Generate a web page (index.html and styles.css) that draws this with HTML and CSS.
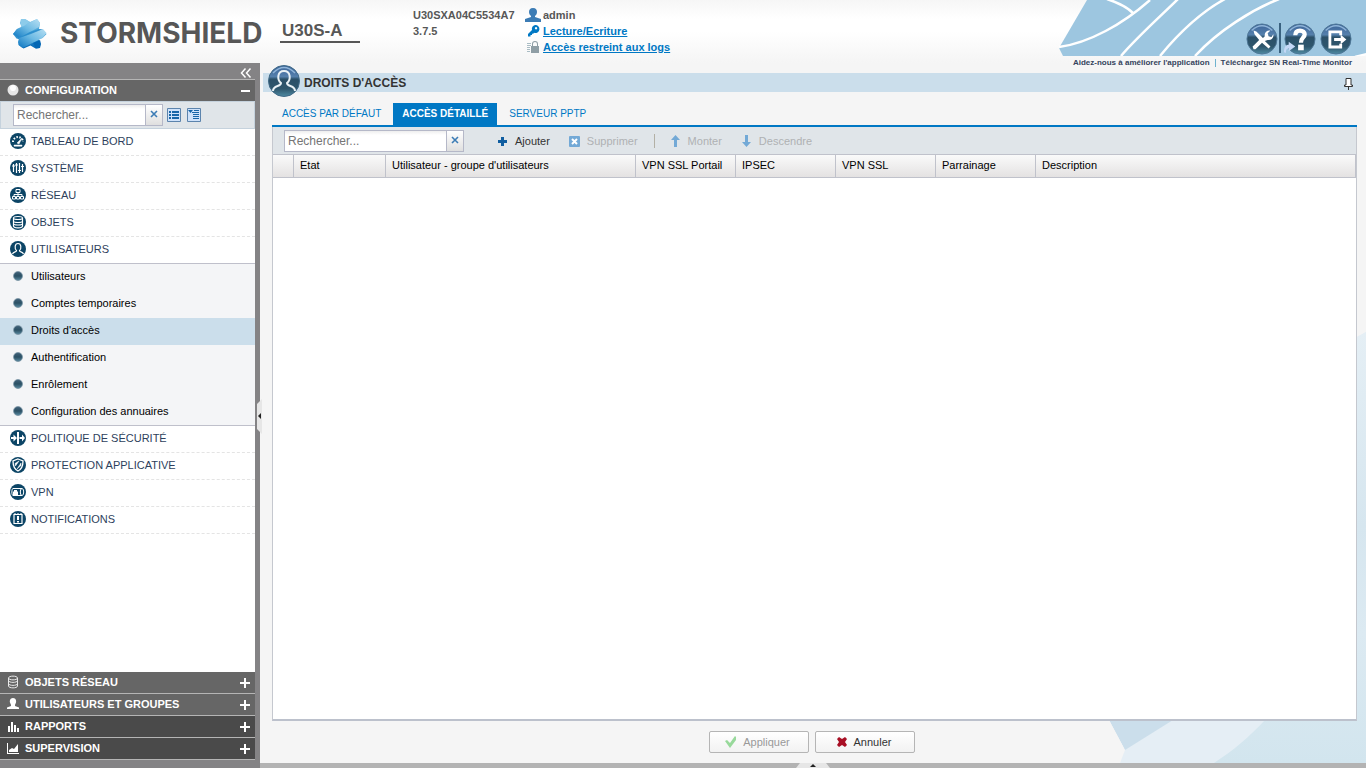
FILE: index.html
```html
<!DOCTYPE html>
<html lang="fr">
<head>
<meta charset="utf-8">
<title>Stormshield U30S-A - Droits d'accès</title>
<link rel="stylesheet" href="styles.css">
</head>
<body>
<svg class="defs" aria-hidden="true">
  <defs>
    <linearGradient id="orb" x1="0" y1="0" x2="0" y2="1">
      <stop offset="0" stop-color="#3c6499"/><stop offset=".36" stop-color="#5580ac"/><stop offset=".44" stop-color="#2b5068"/><stop offset=".75" stop-color="#2e566c"/><stop offset="1" stop-color="#4f8ba3"/>
    </linearGradient>
    <linearGradient id="star" x1="0" y1="0" x2="0" y2="1">
      <stop offset="0" stop-color="#7cc3e8"/><stop offset=".5" stop-color="#3f9fd6"/><stop offset="1" stop-color="#0467b4"/>
    </linearGradient>
    <linearGradient id="band" x1="0" y1="1" x2="1" y2="0">
      <stop offset="0" stop-color="#0a74c0"/><stop offset=".5" stop-color="#6bb9e3"/><stop offset="1" stop-color="#b9e0f3"/>
    </linearGradient>
    <linearGradient id="haze" x1="0" y1="0" x2="0" y2="1">
      <stop offset="0" stop-color="#e5eff5"/><stop offset=".45" stop-color="#d6e6ef"/><stop offset=".7" stop-color="#dceaf2"/><stop offset="1" stop-color="#d2e5ee"/>
    </linearGradient>
  </defs>
</svg>

<header class="header">
  <svg class="logo" viewBox="0 0 34 30" aria-hidden="true">
    <path d="M8 0l4 0 5 3 7-3 3 4-1 6 4 1 3.500 4-4 4-4 1 2 5-1 4-4 0.500-5-3-7 3-4-3 1-6-4-1L0 15l4-5 5-1-2-5z" fill="url(#star)"/>
    <path d="M0 15l4-5L24 0l3 4-1 4-20 11z" fill="url(#band)"/>
    <path d="M5 23l1-4 24-9 3.500 4-4 5-20 10-4-3z" fill="url(#band)"/>
    <path d="M8 0h4l5 3-6 4-3 1z" fill="#8ccbea"/>
    <path d="M20 24l7-3 1 4-1 4-4 .5z" fill="#0467b4"/>
    <path d="M6 19l11-6 9-3 4 0-12 5z" fill="#1c82c6" opacity=".6"/>
  </svg>
  <span class="brand">STORMSHIELD</span>
  <span class="model">U30S-A</span>
  <div class="device"><span>U30SXA04C5534A7</span><span>3.7.5</span></div>
  <div class="session">
    <div class="session-row">
      <svg width="16" height="14" viewBox="0 0 16 14"><path d="M8 0c3 0 4 2 4 4 0 2-1 3-2 4v1l6 2v3H0v-3l6-2V8C5 7 4 6 4 4c0-2 1-4 4-4z" fill="#3c7cb5"/></svg>
      <span>admin</span>
    </div>
    <div class="session-row">
      <svg width="16" height="14" viewBox="0 0 16 14"><path fill-rule="evenodd" d="M10 1a4 4 0 1 1-1 7.700L8 10 7 9.500V11H5.500v1.500H3V10l4-4a4 4 0 0 1 3-5zm1 2a1.200 1.200 0 1 0 .1 0z" fill="#0078c4"/></svg>
      <a href="#">Lecture/Ecriture</a>
    </div>
    <div class="session-row">
      <svg width="16" height="14" viewBox="0 0 16 14"><path d="M2 3h4v1H2zm0 2h4v1H2zm0 2h3v1H2zm0 2h3v1H2zm0 2h3v1H2z" fill="#a9bcc4"/><path fill-rule="evenodd" d="M6 6h1V4a3 3 0 0 1 6 0v2h1v7H6zm2 0h4V4a2 2 0 0 0-4 0z" fill="#8f9ea5"/></svg>
      <a href="#">Accès restreint aux logs</a>
    </div>
  </div>
  <div class="banner">
    <svg class="banner-art" viewBox="0 0 307 56" preserveAspectRatio="xMaxYMin slice" aria-hidden="true">
      <path d="M28 0H307V55L296 56H4L0 48z" fill="#9dc6e0"/>
      <g fill="none" stroke="#fff" stroke-width="2.500">
        <path d="M0 47C30 43 64 24 91 0M48-1C57 2 68 7 74 13M62 56C77 38 105 13 119-1M101 56C124 28 144 11 166-1M136 56C160 30 193 10 220-1M296 57l12-3"/>
      </g>
    </svg>
    <div class="banner-tools">
      <button class="orb" aria-label="Outils"><svg width="32" height="32" viewBox="0 0 34 34"><circle cx="17" cy="17" r="16" fill="url(#orb)" stroke="#4f7898"/><path d="M6 8Q17-2 28 8" fill="none" stroke="#8fb4d8" stroke-width="1.500"/><path d="M8 8l3 1 7 7 2-2a5 5 0 0 1 6-6l-3 3 1 3 3 1 2-3a5 5 0 0 1-6 6l-3 1 6 6-2 2-7-6-5 5-2 2H8l-1-3 2-2 5-5-5-6z" fill="#fff"/></svg></button>
      <span class="tool-sep"></span>
      <button class="orb" aria-label="Aide"><svg width="32" height="32" viewBox="0 0 34 34"><circle cx="17" cy="17" r="16" fill="url(#orb)" stroke="#4f7898"/><path d="M6 8Q17-2 28 8" fill="none" stroke="#8fb4d8" stroke-width="1.500"/><path d="M12 13c0-4 2-5 5-5s5 2 5 4c0 4-4 3-4 9" fill="none" stroke="#fff" stroke-width="4.500"/><path d="M15 23h6v6h-6z" fill="#fff"/><path d="M0 31c0-7 3-8 5-8v-3l7 5-7 5v-3c-2 0-3 1-3 5z" fill="#c5d8f6"/></svg></button>
      <button class="orb" aria-label="Déconnexion"><svg width="32" height="32" viewBox="0 0 34 34"><circle cx="17" cy="17" r="16" fill="url(#orb)" stroke="#4f7898"/><path d="M6 8Q17-2 28 8" fill="none" stroke="#8fb4d8" stroke-width="1.500"/><path d="M22 13V9.500H10.500v16H22V22M15 17.500h9" fill="none" stroke="#fff" stroke-width="3"/><path d="M22 12.500l6 5-6 5z" fill="#fff"/></svg></button>
    </div>
    <div class="banner-links"><a href="#">Aidez-nous à améliorer l'application</a><i></i><a href="#">Téléchargez SN Real-Time Monitor</a></div>
  </div>
</header>

<div class="shell">
  <aside class="sidebar">
    <div class="collapse"><button class="plain" aria-label="Réduire"><svg width="12" height="10" viewBox="0 0 12 10"><path d="M5.500.5L1.500 5l4 4.500M10.500.5L6.500 5l4 4.500" fill="none" stroke="#fff" stroke-width="1.500"/></svg></button></div>
    <button class="section section-open">
      <svg width="12" height="12" viewBox="0 0 12 12"><circle cx="6" cy="6" r="5.500" fill="#e6e6e6"/><circle cx="6" cy="4" r="3" fill="#fff"/></svg>
      <span>CONFIGURATION</span>
      <svg class="sign" width="11" height="11" viewBox="0 0 11 11"><path d="M1 4h9v2H1z" fill="#fff"/></svg>
    </button>
    <div class="side-search">
      <div class="search"><input type="text" placeholder="Rechercher..." aria-label="Rechercher un module"><button aria-label="Effacer"><svg width="8" height="8" viewBox="0 0 8 8"><path d="M1 1l6 6M7 1L1 7" stroke="#3c7cb5" stroke-width="1.600"/></svg></button></div>
      <button class="plain" aria-label="Tout replier"><svg width="14" height="14" viewBox="0 0 14 14"><path d="M.5.5h13v13H.5z" fill="#cfe2fa" stroke="#5c84ad"/><path d="M2 3h2v2H2zm3 0h7v2H5zM2 6h2v2H2zm3 0h7v2H5zM2 9h2v2H2zm3 0h7v2H5z" fill="#1766a8"/></svg></button>
      <button class="plain" aria-label="Tout déplier"><svg width="14" height="14" viewBox="0 0 14 14"><path d="M.5.5h13v13H.5z" fill="#cfe2fa" stroke="#5c84ad"/><path d="M1 2h5L3.500 5zM7 2h5v1H7zM5 4h7v1H5zm1 2h6v1H6zm0 2h6v1H6zm0 2h6v1H6z" fill="#1766a8"/></svg></button>
    </div>
    <nav class="menu">
      <a class="item" href="#"><svg viewBox="0 0 16 16"><circle cx="8" cy="8" r="8" fill="#0c4566"/><path d="M3 9a5 5 0 0 1 10 0" fill="none" stroke="#fff" stroke-width="2" stroke-dasharray="1.500 1.500"/><path d="M7 10l5-5-3 6zM4 12h8v1.200H4z" fill="#fff" stroke="#fff" stroke-width=".5"/></svg>TABLEAU DE BORD</a>
      <a class="item" href="#"><svg viewBox="0 0 16 16"><circle cx="8" cy="8" r="8" fill="#0c4566"/><path d="M3.500 4v8M6.500 3v10M9.500 3v10M12.500 4v8M2 6h3M5 5h3M8 10.500h3M11 6.500h3" stroke="#fff" stroke-width="1.200"/></svg>SYSTÈME</a>
      <a class="item" href="#"><svg viewBox="0 0 16 16"><circle cx="8" cy="8" r="8" fill="#0c4566"/><path d="M6 2.500h4v3H6zM2.500 9.500h3v2.500h-3zm4 0h3v2.500h-3zm4 0h3v2.500h-3zM8 5.500v4M4 9.500v-2h8v2" fill="none" stroke="#fff"/></svg>RÉSEAU</a>
      <a class="item" href="#"><svg viewBox="0 0 16 16"><circle cx="8" cy="8" r="8" fill="#0c4566"/><path d="M3.500 4c0-2 9-2 9 0s-9 2-9 0v8c0 2.500 9 2.500 9 0V4M3.500 7c0 2 9 2 9 0M3.500 9.500c0 2 9 2 9 0" fill="none" stroke="#fff" stroke-width="1.200"/></svg>OBJETS</a>
      <a class="item item-open" href="#"><svg viewBox="0 0 16 16"><circle cx="8" cy="8" r="8" fill="#0c4566"/><path d="M2.500 13c1-3 4-1.500 4-3.500C4.500 8 4.500 2.500 8 2.500S11.500 8 9.500 9.500c0 2 3 .5 4 3.500" fill="none" stroke="#fff" stroke-width="1.200"/></svg>UTILISATEURS</a>
      <div class="submenu">
        <a href="#"><i></i>Utilisateurs</a>
        <a href="#"><i></i>Comptes temporaires</a>
        <a href="#" class="current" aria-current="page"><i></i>Droits d'accès</a>
        <a href="#"><i></i>Authentification</a>
        <a href="#"><i></i>Enrôlement</a>
        <a href="#"><i></i>Configuration des annuaires</a>
      </div>
      <a class="item" href="#"><svg viewBox="0 0 16 16"><circle cx="8" cy="8" r="8" fill="#0c4566"/><path d="M7 2h2v12H7zM1 7h2.500V4.500L7 8l-3.500 3.500V9H1zM9.500 7H12V4.500L15 8l-3 3.500V9H9.500z" fill="#fff"/></svg>POLITIQUE DE SÉCURITÉ</a>
      <a class="item" href="#"><svg viewBox="0 0 16 16"><circle cx="8" cy="8" r="8" fill="#0c4566"/><path d="M8 2l5 2c0 5-1 8-5 10C4 12 3 9 3 4z" fill="none" stroke="#fff" stroke-width="1.300"/><path d="M5 6.500L9 4 5.500 9zM7 12l4-6v2.500z" fill="#fff" stroke="#fff" stroke-width=".5"/></svg>PROTECTION APPLICATIVE</a>
      <a class="item" href="#"><svg viewBox="0 0 16 16"><circle cx="8" cy="8" r="8" fill="#0c4566"/><path d="M12 4.500H3c-1.500 0-1.500 7 0 7h9" fill="none" stroke="#fff"/><ellipse cx="12" cy="8" rx="1.700" ry="3.500" fill="none" stroke="#fff"/><path d="M3 7.500h1V6h3v1.500h1V11H3z" fill="#fff"/></svg>VPN</a>
      <a class="item" href="#"><svg viewBox="0 0 16 16"><circle cx="8" cy="8" r="8" fill="#0c4566"/><path d="M4 3.500h8v9H4z" fill="none" stroke="#fff" stroke-width="1.200"/><path d="M7 5h2v4H7zm0 5h2v1.500H7z" fill="#fff"/><path d="M5 2v2M8 2v2M11 2v2" stroke="#fff"/></svg>NOTIFICATIONS</a>
    </nav>
    <button class="section">
      <svg width="12" height="14" viewBox="0 0 12 14"><path d="M1.500 3c0-2.500 9-2.500 9 0s-9 2.500-9 0v8c0 2.500 9 2.500 9 0V3M1.500 5.500c0 2.500 9 2.500 9 0M1.500 8.500c0 2.500 9 2.500 9 0" fill="none" stroke="#e8e8e8"/></svg>
      <span>OBJETS RÉSEAU</span><svg class="sign" width="11" height="11" viewBox="0 0 11 11"><path d="M0 4h10v2H0zM4 0h2v10H4z" fill="#fff"/></svg>
    </button>
    <button class="section">
      <svg width="12" height="14" viewBox="0 0 12 14"><path d="M6 1c3 0 3.500 3 3 4.500C8.500 7 8 7 8 9l4 1.500V12H0v-1.500L4 9c0-2-.5-2-1-3.500C2.500 4 3 1 6 1z" fill="#fff"/></svg>
      <span>UTILISATEURS ET GROUPES</span><svg class="sign" width="11" height="11" viewBox="0 0 11 11"><path d="M0 4h10v2H0zM4 0h2v10H4z" fill="#fff"/></svg>
    </button>
    <button class="section section-dark">
      <svg width="12" height="14" viewBox="0 0 12 14"><path d="M1 7h2v6H1zm3-4h2v10H4zm3 3h2v7H7zm3 3h2v4h-2z" fill="#fff"/></svg>
      <span>RAPPORTS</span><svg class="sign" width="11" height="11" viewBox="0 0 11 11"><path d="M0 4h10v2H0zM4 0h2v10H4z" fill="#fff"/></svg>
    </button>
    <button class="section section-dark">
      <svg width="12" height="14" viewBox="0 0 12 14"><path d="M0 2h1v10h11v1H0z" fill="#fff"/><path d="M2 11V9l3-2 2 1 4-5v8z" fill="#fff"/></svg>
      <span>SUPERVISION</span><svg class="sign" width="11" height="11" viewBox="0 0 11 11"><path d="M0 4h10v2H0zM4 0h2v10H4z" fill="#fff"/></svg>
    </button>
  </aside>
  <div class="splitter"><button class="grip" aria-label="Replier le panneau"><svg width="5" height="35" viewBox="0 0 5 35"><path d="M5 0v35L0 30V5z" fill="#e6e6e6"/><path d="M4 14v6l-3-3z" fill="#222"/></svg></button></div>

  <main class="main">
    <svg class="backdrop" viewBox="0 0 257 431" aria-hidden="true">
      <path d="M257 0L240 9C120 120 40 300 11 431H257z" fill="#e5eef5"/>
      <path d="M257 0L244 8V240L248 388 156 388C140 405 125 418 105 431H257z" fill="url(#haze)"/>
      <path d="M0 388H64L16 418z" fill="#cbdeeb"/>
      <path d="M0 388l16 30-5 13H0z" fill="#f5f5f5"/>
    </svg>
    <div class="page-title">
      <svg width="32" height="32" viewBox="0 0 32 32"><circle cx="16" cy="16" r="15.500" fill="url(#orb)" stroke="#416a87"/><path d="M5 8Q16-3 27 8" fill="none" stroke="#8fb4d8" stroke-width="1.500"/><path d="M5 26c0-6 8-4 8-8C9 15 9 6 16 6s7 9 3 12c0 4 8 2 8 8" fill="none" stroke="#e9f1f5" stroke-width="2"/></svg>
      <h1>DROITS D'ACCÈS</h1>
      <button class="plain pin" aria-label="Épingler"><svg width="9" height="12" viewBox="0 0 9 12"><path d="M2 .5h5V7h1.500v1.500h-8V7H2zM4.500 8.500V12" fill="#fff" stroke="#333"/></svg></button>
    </div>
    <div class="tabs" role="tablist">
      <button role="tab">ACCÈS PAR DÉFAUT</button>
      <button role="tab" class="active" aria-selected="true">ACCÈS DÉTAILLÉ</button>
      <button role="tab">SERVEUR PPTP</button>
    </div>
    <section class="panel">
      <div class="toolbar">
        <div class="search search-wide"><input type="text" placeholder="Rechercher..." aria-label="Rechercher"><button aria-label="Effacer"><svg width="8" height="8" viewBox="0 0 8 8"><path d="M1 1l6 6M7 1L1 7" stroke="#3c7cb5" stroke-width="1.600"/></svg></button></div>
        <button class="action"><svg width="11" height="12" viewBox="0 0 11 12"><path d="M4 2h3v3h3v3H7v3H4V8H1V5h3z" fill="#0f5da0"/></svg>Ajouter</button>
        <button class="action" disabled><svg width="11" height="12" viewBox="0 0 11 12"><rect y="1" width="11" height="11" rx="1" fill="#73a9d6"/><path d="M3 4l5 5M8 4L3 9" stroke="#fff" stroke-width="2"/></svg>Supprimer</button>
        <span class="divider"></span>
        <button class="action" disabled><svg width="11" height="12" viewBox="0 0 11 12"><path d="M5.500 0L10 5H7v7H4V5H1z" fill="#73a9d6"/></svg>Monter</button>
        <button class="action" disabled><svg width="11" height="12" viewBox="0 0 11 12"><path d="M5.500 12L10 7H7V0H4v7H1z" fill="#73a9d6"/></svg>Descendre</button>
      </div>
      <table class="grid">
        <colgroup><col class="c-mark"><col class="c-state"><col class="c-user"><col class="c-right"><col class="c-right"><col class="c-right"><col class="c-right"><col></colgroup>
        <thead><tr><th></th><th>Etat</th><th>Utilisateur - groupe d'utilisateurs</th><th>VPN SSL Portail</th><th>IPSEC</th><th>VPN SSL</th><th>Parrainage</th><th>Description</th></tr></thead>
      </table>
    </section>
    <div class="footer">
      <button class="push" disabled><svg width="12" height="12" viewBox="0 0 12 12"><path d="M0 5l2-1 3 3 5-7 1 1v3l-6 8z" fill="#98d99b"/></svg>Appliquer</button>
      <button class="push"><svg width="12" height="12" viewBox="0 0 12 12"><path d="M1 3l2-2 3 2 3-2 2 2-2 3 2 3-2 2-3-2-3 2-2-2 2-3z" fill="#a80f24"/></svg>Annuler</button>
    </div>
    <div class="bottom-bar"><button class="plain" aria-label="Afficher les messages"><svg width="34" height="5" viewBox="0 0 34 5"><path d="M4 0h26l4 5H0z" fill="#e6e6e6"/><path d="M17 1l3 3h-6z" fill="#222"/></svg></button></div>
  </main>
</div>
</body>
</html>
```

FILE: styles.css
```css
* { box-sizing: border-box; }
body {
  margin: 0;
  height: 100vh;
  display: flex;
  flex-direction: column;
  overflow: hidden;
  background: #f5f5f5;
  color: #333;
  font: 11px/16px "Liberation Sans", Arial, sans-serif;
}
.defs { position: absolute; width: 0; height: 0; }
svg { display: block; flex: none; }
a { color: inherit; text-decoration: none; }
button { font: inherit; color: inherit; cursor: pointer; }
.plain, .orb { border: 0; padding: 0; background: none; }

/* Header */
.header {
  flex: none;
  height: 63px;
  display: flex;
  align-items: flex-start;
  background: linear-gradient(#f6f6f6, #fff 30%, #fff 50%, #f5f5f5);
}
.logo { width: 34px; height: 30px; margin: 19px 0 0 13px; }
.brand {
  width: 219px;
  padding: 17px 0 0 13px;
  color: #575757;
  font: 700 28px/32px Inter, sans-serif;
}
.model {
  width: 80px;
  margin: 21px 0 0 14px;
  padding-left: 2px;
  border-bottom: 2px solid #575757;
  color: #575757;
  font-size: 17px;
  line-height: 20px;
  font-weight: bold;
}
.device, .session { display: flex; flex-direction: column; padding-top: 7px; color: #575757; font-weight: bold; }
.device { width: 112px; margin-left: 53px; }
.session-row { display: flex; align-items: center; gap: 2px; }
.session a { color: #0078c4; text-decoration: underline; }
.banner { position: relative; width: 307px; height: 69px; margin-left: auto; }
.banner-art { position: absolute; top: 0; right: 0; width: 100%; height: 56px; }
.banner-tools { position: absolute; top: 23px; right: 14px; display: flex; align-items: flex-start; gap: 4px; }
.banner-tools .tool-sep { width: 2px; height: 30px; margin: 0 -3px; background: #39617f; }
.orb:nth-child(3) { margin-left: 2px; }
.banner-links {
  position: absolute;
  top: 57px;
  right: 14px;
  display: flex;
  align-items: center;
  gap: 5px;
  white-space: nowrap;
  color: #34435c;
  font-size: 8px;
  line-height: 12px;
  font-weight: bold;
}
.banner-links i { width: 1px; height: 8px; background: #6fb3cf; }

/* Side navigation */
.shell { flex: 1; min-height: 0; display: flex; }
.sidebar { width: 255px; flex: none; display: flex; flex-direction: column; background: #848385; padding-bottom: 8px; }
.collapse { display: flex; justify-content: flex-end; align-items: center; height: 16px; padding: 3px 3px 0; }
.section {
  flex: none;
  display: flex;
  align-items: center;
  gap: 6px;
  height: 22px;
  padding: 0 5px 2px 7px;
  border: 0;
  border-bottom: 1px solid #b5b5b5;
  background: #666;
  color: #fff;
  font-weight: bold;
  text-align: left;
}
.section .sign { margin: 4px -1px 0 auto; }
.section-open { border-top: 1px solid #b5b5b5; border-bottom: 0; }
.section-dark { background: #4a4a4a; }
.side-search {
  flex: none;
  display: flex;
  align-items: center;
  gap: 6px;
  height: 28px;
  padding-left: 12px;
  background: #e0e5e9;
  border: 1px solid #c5d2dd;
}
.search { display: flex; width: 150px; height: 22px; border: 1px solid #b5b8c8; background: #fff; }
.side-search .search { margin-right: -2px; }
.search input { flex: 1; min-width: 0; border: 0; padding: 0 3px; background: linear-gradient(#eee, #fff 4px); color: #333; font: 12px "Liberation Sans", Arial, sans-serif; outline: 0; }
.search input::placeholder { color: #757575; }
.search button { display: flex; justify-content: center; width: 17px; padding: 5px 0; border: 0; border-left: 1px solid #b5b8c8; background: linear-gradient(#fff, #dfdfdf); }
.menu { flex: 1; min-height: 0; background: #fff; }
.item, .submenu a { display: flex; align-items: center; height: 27px; color: #2e3f5c; }
.item { gap: 5px; padding: 0 0 2px 10px; border-bottom: 1px dashed #e4e4e4; }
.item svg { width: 16px; height: 16px; }
.item-open { border-bottom: 1px solid #bfc0cb; }
.submenu { background: #f4f5f7; border-bottom: 1px solid #bfc0cb; }
.submenu a { gap: 8px; padding: 0 0 3px 13px; color: #000; }
.submenu a:last-child { height: 26px; padding-bottom: 2px; }
.submenu .current { background: #cbdeeb; }
.submenu i { width: 10px; height: 10px; border-radius: 50%; background: linear-gradient(#3f6078, #2b5064 50%, #53839a); border: 1px solid #7e98a8; }
.splitter { position: relative; flex: none; width: 5px; background: #848385; }
.grip { position: absolute; top: calc(50% - 17px); left: 2px; border: 0; padding: 0; background: none; z-index: 1; }

/* Main area */
.main { position: relative; z-index: 0; flex: 1; min-width: 0; display: flex; flex-direction: column; }
.backdrop { position: absolute; z-index: -1; right: 0; bottom: 5px; width: 257px; height: 431px; }
.page-title { display: flex; align-items: center; gap: 4px; height: 19px; margin: 10px 0 11px 3px; padding: 0 13px 0 5px; background: #cbdeeb; flex: none; }
.page-title svg { margin-top: -4px; }
.page-title .pin { margin: 2px 0 0 auto; }
.page-title .pin svg { margin: 0; }
h1 { margin: 0; color: #333; font-size: 12px; line-height: 16px; }
.tabs { flex: none; display: flex; gap: 2px; margin: 0 9px 0 12px; border-bottom: 2px solid #0078c4; }
.tabs button { height: 22px; padding: 0 10px; border: 0; background: none; color: #0078c4; font-size: 10px; }
.tabs .active { padding: 0 9px; background: #0078c4; color: #fff; font-weight: bold; }
.panel { flex: 1; display: flex; flex-direction: column; margin: 0 9px 0 12px; border: 1px solid #c5c8cf; border-top: 0; border-bottom: 2px solid #bcc1cc; background: #fff; }
.toolbar { display: flex; align-items: center; height: 27px; padding-left: 11px; background: #e0e5e9; color: #333; }
.search-wide { width: 180px; margin-right: 30px; }
.action { display: flex; align-items: center; gap: 7px; padding: 0 3px; margin-right: 13px; border: 0; background: none; }
.action:disabled { color: #afb1b3; }
.divider { width: 1px; height: 14px; background: #b3b0a5; margin-right: 12px; }
.grid { width: 100%; table-layout: fixed; border-collapse: separate; border-spacing: 0; }
.grid th { height: 24px; padding: 0 6px 2px; border: solid #c0c2cb; border-width: 1px 1px 1px 0; background: linear-gradient(#fafafa, #e4e2e2); color: #000; font-weight: normal; text-align: left; white-space: nowrap; }
.c-mark { width: 21px; }
.c-state { width: 92px; }
.c-user { width: 250px; }
.c-right { width: 100px; }
.footer { flex: none; display: flex; justify-content: center; gap: 6px; padding: 10px 2px 10px 0; }
.push { display: flex; align-items: center; justify-content: center; gap: 6px; width: 100px; height: 22px; padding: 0 3px 0 0; border: 1px solid #b5b5b5; border-radius: 2px; background: linear-gradient(#fff, #f2f2f2); color: #333; }
.push:disabled { color: #999; }
.bottom-bar { flex: none; display: flex; justify-content: center; height: 5px; background: #b3b3b3; }
```
